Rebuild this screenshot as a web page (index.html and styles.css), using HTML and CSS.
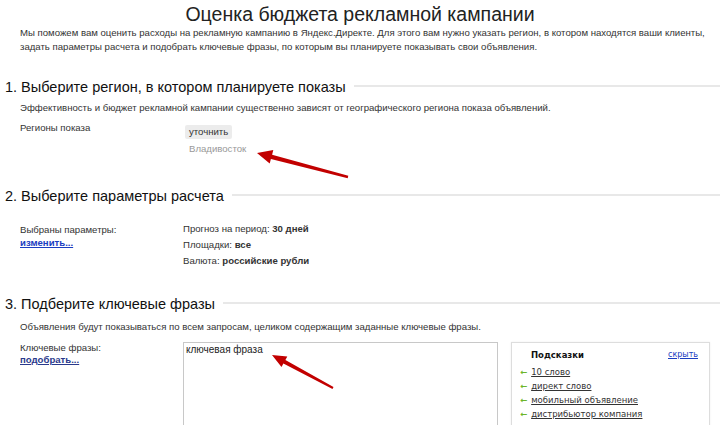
FILE: index.html
```html
<!DOCTYPE html>
<html lang="ru">
<head>
  <meta charset="UTF-8">
  <title>Оценка бюджета рекламной кампании</title>
  <link rel="stylesheet" href="styles.css">
</head>
<body>
  <div class="page">
    <h1>Оценка бюджета рекламной кампании</h1>
    <p class="intro">Мы поможем вам оценить расходы на рекламную кампанию в Яндекс.Директе. Для этого вам нужно указать регион, в котором находятся ваши клиенты,<br>задать параметры расчета и подобрать ключевые фразы, по которым вы планируете показывать свои объявления.</p>

    <div class="section section-region">
      <div class="section-head"><h2>1. Выберите регион, в котором планируете показы</h2><span class="rule"></span></div>
      <p class="desc">Эффективность и бюджет рекламной кампании существенно зависят от географического региона показа объявлений.</p>
      <div class="row">
        <div class="label">Регионы показа</div>
        <div class="value">
          <button class="btn">уточнить</button>
          <div class="region">Владивосток</div>
        </div>
      </div>
    </div>

    <div class="section section-params">
      <div class="section-head"><h2>2. Выберите параметры расчета</h2><span class="rule"></span></div>
      <div class="row">
        <div class="label">Выбраны параметры:<br><a href="#" class="link">изменить...</a></div>
        <div class="value params">
          <div>Прогноз на период: <b>30 дней</b></div>
          <div>Площадки: <b>все</b></div>
          <div>Валюта: <b>российские рубли</b></div>
        </div>
      </div>
    </div>

    <div class="section section-phrases">
      <div class="section-head"><h2>3. Подберите ключевые фразы</h2><span class="rule"></span></div>
      <p class="desc">Объявления будут показываться по всем запросам, целиком содержащим заданные ключевые фразы.</p>
      <div class="row">
        <div class="label">Ключевые фразы:<br><a href="#" class="link link-dark">подобрать...</a></div>
        <div class="value phrases">
          <div class="textarea">ключевая фраза</div>
          <div class="hints">
            <div class="hints-head"><b>Подсказки</b><a href="#" class="hide">скрыть</a></div>
            <ul>
              <li><span class="arr">&larr;</span><a href="#">10 слово</a></li>
              <li><span class="arr">&larr;</span><a href="#">директ слово</a></li>
              <li><span class="arr">&larr;</span><a href="#">мобильный объявление</a></li>
              <li><span class="arr">&larr;</span><a href="#">дистрибьютор компания</a></li>
            </ul>
          </div>
        </div>
      </div>
    </div>

    <svg class="pointer pointer-region" width="110" height="45" viewBox="0 0 110 45">
      <path d="M12 13 L28.3 10 L27.1 14.7 L103.3 35.8 L102.7 38.2 L25.9 18.9 L24.7 23.6 Z" fill="#c20000"/>
    </svg>
    <svg class="pointer pointer-phrase" width="80" height="55" viewBox="0 0 80 55">
      <path d="M12 15 L27.3 16.4 L25.4 19.9 L73.5 47.1 L72.5 48.9 L23.4 23.5 L21.5 27 Z" fill="#c20000"/>
    </svg>
  </div>
</body>
</html>
```

FILE: styles.css
```css
html, body {
  margin: 0;
  overflow: hidden;
}

body {
  font-family: "Liberation Sans", Arial, sans-serif;
  font-size: 9.6px;
  color: #333;
  background: #fff;
}

.page {
  position: relative;
  height: 425px;
  padding: 2px 0 0 5px;
  box-sizing: border-box;
}

h1 {
  font-size: 19.5px;
  font-weight: normal;
  color: #222;
  text-align: center;
  margin: 0;
  line-height: 24px;
  padding-right: 5px;
}

.intro {
  margin: 0 0 0 15px;
  line-height: 14px;
  white-space: nowrap;
}

.section-head {
  display: flex;
  align-items: center;
}

.section-head h2 {
  font-size: 14.5px;
  font-weight: normal;
  color: #111;
  margin: 0;
  line-height: 20px;
  white-space: nowrap;
}

.rule {
  flex: 1;
  height: 2px;
  background: #e8e8e8;
  margin: 0 0 2px 8px;
}

.desc {
  margin: 4px 0 0 15px;
  line-height: 14px;
}

.row {
  display: flex;
  margin-left: 15px;
  line-height: 14px;
}

.label {
  width: 163px;
  flex: none;
}

.link {
  color: #1a3dc1;
  font-weight: bold;
  text-decoration: underline;
}

.link-dark {
  color: #2a3a8c;
}

/* 1. регион */
.section-region {
  margin-top: 23px;
}

.section-region .row {
  margin-top: 6px;
}

.btn {
  display: block;
  font-family: inherit;
  font-size: 9.6px;
  color: #333;
  background: #ececec;
  border: none;
  border-radius: 2px;
  padding: 0 4px;
  margin: 4px 0 0 2px;
  height: 14px;
  line-height: 14px;
}

.region {
  color: #999;
  margin: 3px 0 0 6px;
}

/* 2. параметры */
.section-params {
  margin-top: 30px;
}

.section-params .row {
  margin-top: 15px;
}

.section-params .label {
  line-height: 13px;
  padding-top: 2px;
}

.params div {
  line-height: 16px;
}

/* 3. фразы */
.section-phrases {
  margin-top: 25px;
}

.section-phrases .desc {
  margin-top: 6px;
}

.section-phrases .row {
  margin-top: 8px;
}

.section-phrases .label {
  line-height: 12px;
}

.phrases {
  display: flex;
  gap: 13px;
}

.textarea {
  width: 309px;
  height: 100px;
  border: 1px solid #c8c8c8;
  padding: 1px 2px;
  line-height: 12px;
  color: #222;
  font-size: 10px;
}

.hints {
  width: 199px;
  height: 100px;
  border: 1px solid #ddd;
  box-shadow: 0 0 2px #eee;
  padding: 5px 0 0 8px;
  box-sizing: border-box;
  font-family: "DejaVu Sans", Verdana, sans-serif;
  font-size: 8.5px;
}

.hints-head {
  display: flex;
  justify-content: space-between;
  padding: 0 11px 0 11px;
  line-height: 14px;
}

.hints-head b {
  color: #111;
}

.hide {
  color: #1a3dc1;
  text-decoration: underline;
  font-size: 8px;
}

.hints ul {
  list-style: none;
  margin: 3px 0 0;
  padding: 0;
}

.hints li {
  line-height: 14px;
  white-space: nowrap;
}

.hints li a {
  color: #333;
  text-decoration: underline;
}

.arr {
  color: #6cb52a;
  font-weight: bold;
  margin-right: 4px;
}

.pointer {
  position: absolute;
}

.pointer-region {
  left: 245px;
  top: 140px;
}

.pointer-phrase {
  left: 260px;
  top: 340px;
}
```
